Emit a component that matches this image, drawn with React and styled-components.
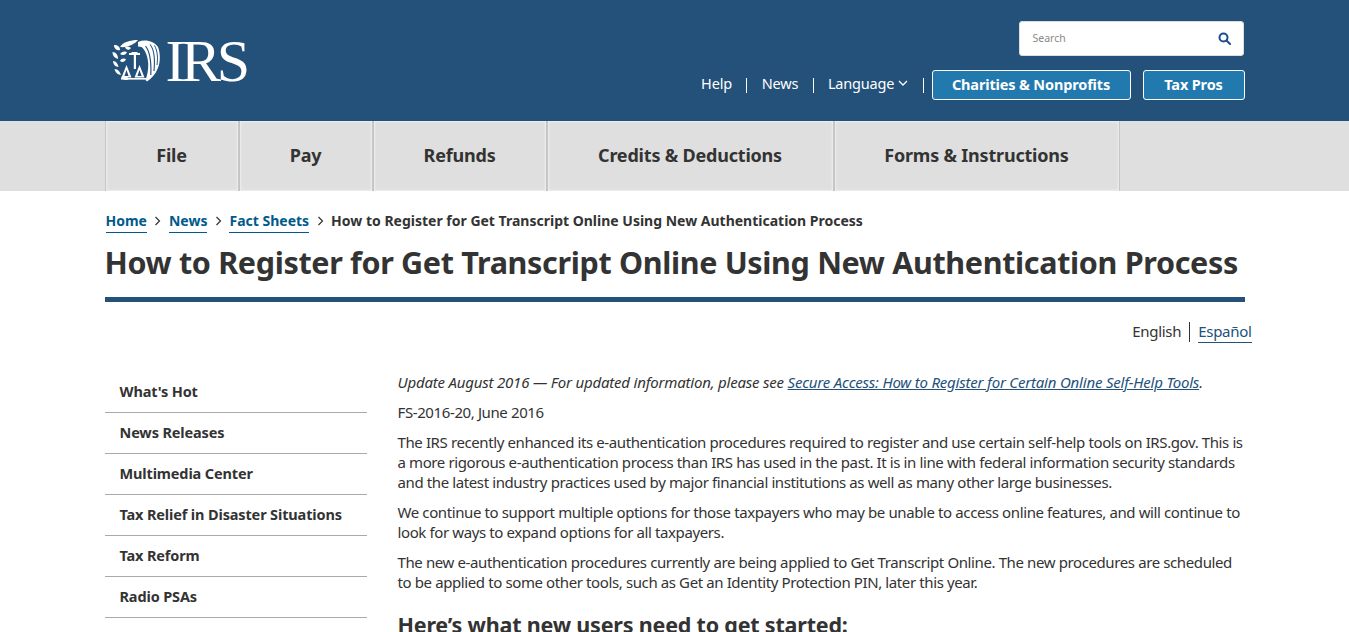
import React from "react";
import styled, { createGlobalStyle } from "styled-components";

const Global = createGlobalStyle`
  html, body { margin: 0; padding: 0; overflow: hidden; background: #fff; }
  #root { height: 632px; overflow: hidden; }
  * { box-sizing: border-box; }
  body { font-family: "Noto Sans", Arial, sans-serif; color: #333; }
`;

const Container = styled.div`
  width: 1140px;
  margin: 0 auto;
  position: relative;
`;
const Header = styled.header`
  background: #23517a;
  height: 121px;
`;
const HeaderInner = styled(Container)`
  display: flex;
  justify-content: space-between;
  height: 100%;
`;
const Logo = styled.a`
  display: flex;
  align-items: center;
  gap: 6px;
  padding: 0 0 0 7px;
  height: 100%;
  color: #fff;
`;
const LogoText = styled.span`
  font-family: "Liberation Serif", serif;
  font-size: 60px;
  line-height: 60px;
  letter-spacing: -4.4px;
`;
const HeaderRight = styled.div`
  display: flex;
  flex-direction: column;
  align-items: flex-end;
  padding-top: 21px;
  gap: 14px;
`;
const Search = styled.div`
  width: 225px;
  height: 35px;
  margin-right: 1px;
  background: #fff;
  border: 1px solid #ddd;
  border-radius: 3px;
  display: flex;
  align-items: center;
  justify-content: space-between;
  padding: 0 12px 0 13px;
  font-size: 10.5px;
  color: #8a8a8a;
`;
const SearchLabel = styled.span`
  padding-bottom: 2px;
`;
const UtilRow = styled.nav`
  display: flex;
  align-items: center;
  height: 30px;
`;
const UtilLink = styled.a`
  color: #fff;
  font-size: 14.5px;
  letter-spacing: -0.2px;
  line-height: 15px;
  height: 15px;
  display: inline-flex;
  align-items: center;
  gap: 4px;
  padding: 0 14.4px 4px;
  border-right: 1px solid #fff;
  margin-right: ${(p) => (p.$last ? "8px" : "0")};
`;
const AudienceButton = styled.a`
  height: 30px;
  width: ${(p) => p.$w}px;
  margin-left: ${(p) => p.$ml}px;
  padding-bottom: 2px;
  background: #2279ae;
  border: 1px solid #fff;
  border-radius: 3px;
  color: #fff;
  font-size: 14.5px;
  font-weight: 700;
  letter-spacing: -0.15px;
  display: flex;
  align-items: center;
  justify-content: center;
`;
const NavBar = styled.div`
  background: #dfdfdf;
  height: 70px;
`;
const NavList = styled(Container)`
  display: flex;
  height: 70px;
`;
const NavItem = styled.a`
  width: ${(p) => p.$w}px;
  height: 70px;
  padding-bottom: 2px;
  background: #dfdfdf;
  border-right: ${(p) => p.$rw}px solid #c6c6c6;
  border-left: ${(p) => p.$lw}px solid #c6c6c6;
  box-shadow: inset 0 0 2px 1px #eeeeee;
  display: flex;
  align-items: center;
  justify-content: center;
  font-size: 18px;
  font-weight: 700;
  letter-spacing: -0.2px;
  color: #333;
`;
const Crumbs = styled.div`
  display: flex;
  align-items: flex-start;
  height: 20px;
  margin-top: 20px;
  padding-left: 1px;
  font-size: 14px;
  line-height: 20px;
  font-weight: 700;
  white-space: nowrap;
`;
const CrumbLink = styled.a`
  color: #005a8c;
  border-bottom: 1px solid #005a8c;
  height: 22px;
`;
const CrumbSep = styled.span`
  width: 22px;
  height: 20px;
  display: flex;
  align-items: center;
  justify-content: center;
`;
const Title = styled.h1`
  margin: 11px 0 0;
  font-size: 30.5px;
  line-height: 40px;
  font-weight: 700;
  letter-spacing: -0.34px;
  white-space: nowrap;
  color: #333;
`;
const Rule = styled.div`
  height: 5px;
  margin-top: 15px;
  background: #23517a;
`;
const LangRow = styled.div`
  display: flex;
  justify-content: flex-end;
  margin: 20px -7px 0 0;
  height: 20px;
  font-size: 15px;
  letter-spacing: -0.3px;
  line-height: 18px;
`;
const LangCurrent = styled.span`
  height: 20px;
  padding-right: 8px;
  border-right: 1px solid #333;
`;
const LangLink = styled.a`
  margin-left: 8px;
  color: #23517a;
  border-bottom: 1px solid #23517a;
  height: 21px;
`;
const Columns = styled.div`
  display: grid;
  grid-template-columns: 262px 848px;
  column-gap: 30px;
  margin-top: 30px;
`;
const SideNav = styled.ul`
  list-style: none;
  margin: 0;
  padding: 0;
`;
const SideItem = styled.li`
  height: 41px;
  line-height: 38px;
  padding-left: 15px;
  border-bottom: 1px solid #aaa;
  font-size: 14.5px;
  font-weight: 700;
  letter-spacing: -0.14px;
  color: #333;
  white-space: nowrap;
`;
const Article = styled.article`
  padding-left: 1px;
  font-size: 15px;
  line-height: 20px;
  letter-spacing: -0.39px;
  white-space: nowrap;
`;
const P = styled.p`
  margin: 0 0 10px;
`;
const Em = styled.em`
  font-style: italic;
  letter-spacing: -0.2px;
`;
const ArticleLink = styled.a`
  color: #23517a;
  text-decoration: underline;
`;
const H2 = styled.h2`
  margin: 18px 0 0;
  font-size: 21.5px;
  line-height: 30px;
  font-weight: 700;
  letter-spacing: -0.2px;
  color: #333;
`;

const Eagle = () => (
  <svg width="48" height="43" viewBox="0 0 48 43" fill="#fff" aria-hidden="true">
    {/* laurel sprig */}
    <path d="M8 8 C11 3 18 1 26 1 C23 5 15 9 8 8Z" />
    <path d="M2 6 C6 6 8 8 8 11 C4 12 2 9 2 6Z" />
    <path d="M13 8 C15 7 18 8 19 9 C17 12 14 11 13 8Z" />
    <path d="M0.5 13 C4 13 6 16 6 20 C3 19 0.5 17 0.5 13Z" />
    <path d="M8 15 C10 12 13 12 15 13 C14 16 11 17 8 15Z" />
    <path d="M1 22 C4 22 6 25 6.5 28 C3.5 28 1 25 1 22Z" />
    <path d="M8 22 C9 19 12 19 14 20 C13 23 10 24 8 22Z" />
    <path d="M2.5 30 C6 30 8 33 9 36 C6 36 3 33 2.5 30Z" />
    <path d="M9 38 C12 36 15 37 17 40 C14 42 11 41 9 38Z" />
    {/* scales */}
    <path d="M17 14 H28 V16 H24 V30 H21.8 V16 H17Z" />
    <path d="M19.5 13 H25.5 V14.5 H19.5Z" />
    <path fillRule="evenodd" d="M14.5 26 L19.5 38.5 H9.5 Z M14.5 31 L12.4 37 H16.6 Z" />
    <path fillRule="evenodd" d="M27.5 26 L32.5 38.5 H22.5 Z M27.5 31 L25.4 37 H29.6 Z" />
    <rect x="9" y="39" width="25" height="1.6" />
    {/* head and wing */}
    <path d="M26 3 C33 0 42 2 46 8 C48.5 14 48.5 24 45.5 30 C43.5 35 39.5 39.5 35 42.5 L33.5 41 C35.5 36 36.5 30 36.2 24 C35.8 18 33.5 11 29.5 8 L26 7.5Z" />
    <path fill="none" stroke="#23517a" strokeWidth="1.2" d="M33.5 7 C37.5 12 39.5 20 38.8 36" />
    <path fill="none" stroke="#23517a" strokeWidth="1.1" d="M38 5.5 C42 10 43.2 19 42 32" />
    <path fill="none" stroke="#23517a" strokeWidth="1" d="M42.5 6.5 C45.6 12 46 19 45 26" />
  </svg>
);

const SearchIcon = () => (
  <svg width="13" height="13" viewBox="0 0 13 13" fill="none" stroke="#1c4f8c" strokeWidth="2" aria-hidden="true">
    <circle cx="5.5" cy="5.5" r="4" />
    <path d="M8.5 8.5 L12 12" strokeLinecap="round" />
  </svg>
);

const Chevron = ({ color = "#fff", size = 10 }) => (
  <svg width={size} height={size} viewBox="0 0 10 10" fill="none" stroke={color} strokeWidth="1.3" aria-hidden="true">
    <path d="M1 3 L5 7 L9 3" />
  </svg>
);

const CrumbChevron = () => (
  <svg width="7" height="10" viewBox="0 0 7 10" fill="none" stroke="#333" strokeWidth="1.2" aria-hidden="true">
    <path d="M1.5 1 L5.5 5 L1.5 9" />
  </svg>
);

const navItems = [
  ["File", 135, 2, 1],
  ["Pay", 134, 2, 0],
  ["Refunds", 174, 2, 0],
  ["Credits & Deductions", 287, 2, 0],
  ["Forms & Instructions", 285, 1, 0],
];

const sideItems = [
  "What's Hot",
  "News Releases",
  "Multimedia Center",
  "Tax Relief in Disaster Situations",
  "Tax Reform",
  "Radio PSAs",
  "Tax Scams/Consumer Alerts",
];

export default function App() {
  return (
    <>
      <Global />
      <Header>
        <HeaderInner>
          <Logo>
            <Eagle />
            <LogoText>IRS</LogoText>
          </Logo>
          <HeaderRight>
            <Search>
              <SearchLabel>Search</SearchLabel>
              <SearchIcon />
            </Search>
            <UtilRow>
              <UtilLink>Help</UtilLink>
              <UtilLink>News</UtilLink>
              <UtilLink $last>
                Language <Chevron />
              </UtilLink>
              <AudienceButton $w={199} $ml={0}>Charities &amp; Nonprofits</AudienceButton>
              <AudienceButton $w={102} $ml={12}>Tax Pros</AudienceButton>
            </UtilRow>
          </HeaderRight>
        </HeaderInner>
      </Header>
      <NavBar>
        <NavList>
          {navItems.map(([label, w, rw, lw]) => (
            <NavItem key={label} $w={w} $rw={rw} $lw={lw}>{label}</NavItem>
          ))}
        </NavList>
      </NavBar>
      <Container>
        <Crumbs>
          <CrumbLink>Home</CrumbLink>
          <CrumbSep><CrumbChevron /></CrumbSep>
          <CrumbLink>News</CrumbLink>
          <CrumbSep><CrumbChevron /></CrumbSep>
          <CrumbLink>Fact Sheets</CrumbLink>
          <CrumbSep><CrumbChevron /></CrumbSep>
          <span>How to Register for Get Transcript Online Using New Authentication Process</span>
        </Crumbs>
        <Title>How to Register for Get Transcript Online Using New Authentication Process</Title>
        <Rule />
        <LangRow>
          <LangCurrent>English</LangCurrent>
          <LangLink>Español</LangLink>
        </LangRow>
        <Columns>
          <SideNav>
            {sideItems.map((s) => (
              <SideItem key={s}>{s}</SideItem>
            ))}
          </SideNav>
          <Article>
            <P>
              <Em>
                Update August 2016 — For updated information, please see{" "}
                <ArticleLink>Secure Access: How to Register for Certain Online Self-Help Tools</ArticleLink>.
              </Em>
            </P>
            <P>FS-2016-20, June 2016</P>
            <P>
              The IRS recently enhanced its e-authentication procedures required to register and use certain self-help tools on IRS.gov. This is<br />
              a more rigorous e-authentication process than IRS has used in the past. It is in line with federal information security standards<br />
              and the latest industry practices used by major financial institutions as well as many other large businesses.
            </P>
            <P>
              We continue to support multiple options for those taxpayers who may be unable to access online features, and will continue to<br />
              look for ways to expand options for all taxpayers.
            </P>
            <P>
              The new e-authentication procedures currently are being applied to Get Transcript Online. The new procedures are scheduled<br />
              to be applied to some other tools, such as Get an Identity Protection PIN, later this year.
            </P>
            <H2>Here’s what new users need to get started:</H2>
          </Article>
        </Columns>
      </Container>
    </>
  );
}
